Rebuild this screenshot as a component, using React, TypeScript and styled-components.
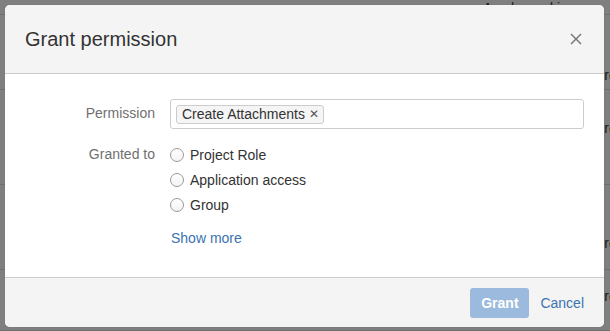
import styled, { createGlobalStyle } from 'styled-components';

const GlobalStyle = createGlobalStyle`
  html, body {
    margin: 0;
    padding: 0;
    width: 610px;
    height: 331px;
    overflow: hidden;
    background: #7f7f7f;
    font-family: 'Liberation Sans', Arial, sans-serif;
  }
  * { box-sizing: border-box; }
`;

const Screen = styled.div`
  position: relative;
  width: 610px;
  height: 331px;
  overflow: hidden;
`;

// the permission table behind the blanket
const Backdrop = styled.div`
  display: flex;
  flex-direction: column;
  width: 610px;
`;

const BgRow = styled.div<{ $h: number; $textTop: number }>`
  height: ${(p) => p.$h}px;
  border-bottom: 1px solid #6f6f6f;
  display: grid;
  grid-template-columns: 483px 1fr;
  padding-top: ${(p) => p.$textTop}px;
  font-size: 14px;
  line-height: 17px;
  color: #191919;
  white-space: nowrap;
  overflow: hidden;
`;

const BgCell = styled.div<{ $indent: number }>`
  padding-left: ${(p) => p.$indent}px;
  overflow: hidden;
`;

const Dialog = styled.div`
  position: absolute;
  left: 5px;
  top: 5px;
  width: 599px;
  height: 322px;
  background: #fff;
  border-radius: 5px;
  overflow: hidden;
  display: flex;
  flex-direction: column;
  box-shadow: 0 0 1px rgba(0, 0, 0, 0.2);
`;

const Header = styled.div`
  height: 69px;
  flex: none;
  background: #f4f4f4;
  border-bottom: 1px solid #cccccc;
  display: flex;
  align-items: center;
  justify-content: space-between;
  padding: 0 21px 0 20px;
`;

const Title = styled.h2`
  margin: 0;
  font-size: 20px;
  font-weight: normal;
  color: #333;
  line-height: 24px;
`;

const CloseButton = styled.button`
  border: 0;
  background: none;
  padding: 0;
  width: 14px;
  height: 14px;
  display: flex;
  align-items: center;
  justify-content: center;
  cursor: pointer;
`;

const Content = styled.div`
  flex: 1;
  padding: 25px 20px 0 20px;
`;

const FieldGroup = styled.div<{ $mb: number }>`
  display: grid;
  grid-template-columns: 130px 1fr;
  column-gap: 15px;
  margin-bottom: ${(p) => p.$mb}px;
`;

const Label = styled.label<{ $pt: number }>`
  text-align: right;
  font-size: 14px;
  line-height: 17px;
  color: #707070;
  padding-top: ${(p) => p.$pt}px;
`;

const SelectBox = styled.div`
  height: 30px;
  border: 1px solid #cccccc;
  border-radius: 3px;
  display: flex;
  align-items: center;
  padding-left: 5px;
`;

const Tag = styled.span`
  display: inline-flex;
  align-items: center;
  height: 19px;
  padding: 0 4px 0 5px;
  background: #f5f5f5;
  border: 1px solid #cccccc;
  border-radius: 3px;
  font-size: 14px;
  color: #333;
  gap: 4px;
`;

const TagRemove = styled.span`
  font-size: 12px;
  color: #555;
  line-height: 1;
`;

const RadioList = styled.div`
  display: flex;
  flex-direction: column;
  gap: 8px;
`;

const RadioRow = styled.label`
  display: flex;
  align-items: center;
  gap: 6px;
  height: 17px;
  font-size: 14px;
  color: #333;
`;

const RadioCircle = styled.span`
  width: 14px;
  height: 14px;
  border-radius: 50%;
  border: 1px solid #9a9a9a;
  background: linear-gradient(#ffffff, #f3f3f3);
  flex: none;
`;

const ShowMore = styled.a`
  font-size: 14px;
  color: #3b73af;
  text-decoration: none;
  padding-left: 1px;
`;

const Footer = styled.div`
  height: 50px;
  flex: none;
  background: #f4f4f4;
  border-top: 1px solid #cccccc;
  display: flex;
  align-items: center;
  justify-content: flex-end;
  padding: 1px 20px 0 0;
  gap: 11px;
`;

const PrimaryButton = styled.button`
  height: 30px;
  width: 59px;
  border: 0;
  border-radius: 3px;
  background: #9cbadd;
  color: #fff;
  font-family: inherit;
  font-size: 14px;
  font-weight: bold;
  padding: 0;
`;

const LinkButton = styled.a`
  font-size: 14px;
  color: #3b73af;
  text-decoration: none;
`;

const bgRows = [
  { h: 15, top: -8, indent: 0, text: 'Any logged in user' },
  { h: 75, top: 52, indent: 112, text: 'Project Role' },
  { h: 95, top: 30, indent: 112, text: 'Project Role' },
  { h: 85, top: 50, indent: 112, text: 'Project Role' },
  { h: 61, top: 18, indent: 112, text: 'Project Role' },
];

const options = ['Project Role', 'Application access', 'Group'];

export default function App() {
  return (
    <Screen>
      <GlobalStyle />
      <Backdrop>
        {bgRows.map((r, i) => (
          <BgRow key={i} $h={r.h} $textTop={r.top}>
            <div />
            <BgCell $indent={r.indent}>{r.text}</BgCell>
          </BgRow>
        ))}
      </Backdrop>

      <Dialog>
        <Header>
          <Title>Grant permission</Title>
          <CloseButton aria-label="Close">
            <svg width="12" height="12" viewBox="0 0 12 12">
              <path d="M1 1 L11 11 M11 1 L1 11" stroke="#707070" strokeWidth="1.4" />
            </svg>
          </CloseButton>
        </Header>

        <Content>
          <FieldGroup $mb={17}>
            <Label $pt={6}>Permission</Label>
            <SelectBox>
              <Tag>
                Create Attachments <TagRemove>✕</TagRemove>
              </Tag>
            </SelectBox>
          </FieldGroup>

          <FieldGroup $mb={17}>
            <Label $pt={0}>Granted to</Label>
            <RadioList>
              {options.map((o) => (
                <RadioRow key={o}>
                  <RadioCircle />
                  {o}
                </RadioRow>
              ))}
            </RadioList>
          </FieldGroup>

          <FieldGroup $mb={0}>
            <div />
            <ShowMore href="#">Show more</ShowMore>
          </FieldGroup>
        </Content>

        <Footer>
          <PrimaryButton disabled>Grant</PrimaryButton>
          <LinkButton href="#">Cancel</LinkButton>
        </Footer>
      </Dialog>
    </Screen>
  );
}
